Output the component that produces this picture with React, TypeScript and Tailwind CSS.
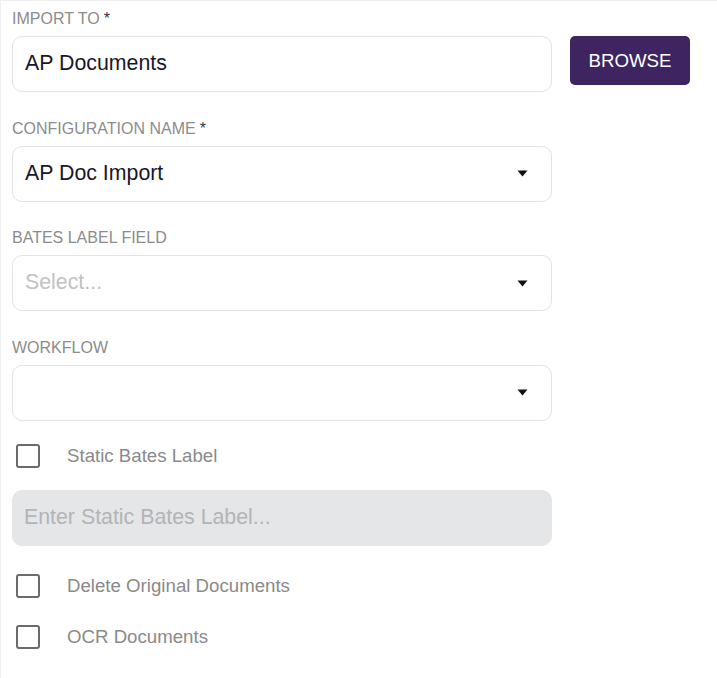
import React from 'react';

const font = { fontFamily: '"Liberation Sans", Arial, sans-serif' };

const Caret = () => (
  <svg width="11" height="7" viewBox="0 0 11 7" className="shrink-0">
    <path d="M0.5 0.5 H10.5 L5.5 6.5 Z" fill="#111" />
  </svg>
);

const FieldLabel = ({ text, required, first }: { text: string; required?: boolean; first?: boolean }) => (
  <div className={`h-5 leading-5 text-[16px] uppercase text-[#8c8c8c] mb-[7px] ${first ? '' : 'mt-[26.5px]'}`}>
    {text}
    {required && <span className="text-[#2f3542] ml-[4px]">*</span>}
  </div>
);

const SelectBox = ({ value, placeholder }: { value?: string; placeholder?: string }) => (
  <div className="w-[540px] h-[56px] rounded-[10px] border border-[#e3e3e3] bg-white flex items-center pl-[12px] pr-[23px]">
    <span className={`flex-1 text-[21.33px] ${value ? 'text-[#17172a]' : 'text-[#c2c2c2]'}`}>{value ?? placeholder}</span>
    <Caret />
  </div>
);

const CheckRow = ({ label, className }: { label: string; className: string }) => (
  <label className={`flex items-center h-8 ${className}`}>
    <span className="ml-[4px] w-[24px] h-[24px] rounded-[3px] border-[2.5px] border-[#6b6b6b] bg-white" />
    <span className="ml-[27px] text-[18.67px] text-[#8a8a8a]">{label}</span>
  </label>
);

export default function App() {
  return (
    <div className="w-[717px] h-[678px] bg-white border-t border-l border-[#efefef]" style={font}>
      <div className="pl-[11px] pt-[8px]">
        <FieldLabel text="Import to" required first />
        <div className="flex items-start">
          <div className="w-[540px] h-[56px] rounded-[10px] border border-[#e3e3e3] flex items-center pl-[12px]">
            <span className="text-[21.33px] text-[#17172a]">AP Documents</span>
          </div>
          <button className="ml-[18px] w-[120px] h-[49px] rounded-[5px] bg-[#3e2461] text-white text-[18.67px] uppercase">
            Browse
          </button>
        </div>

        <FieldLabel text="Configuration name" required />
        <SelectBox value="AP Doc Import" />

        <FieldLabel text="Bates label field" />
        <SelectBox placeholder="Select..." />

        <FieldLabel text="Workflow" />
        <SelectBox />

        <CheckRow label="Static Bates Label" className="mt-[19px]" />

        <div className="mt-[18px] w-[540px] h-[56px] rounded-[10px] bg-[#e5e6e8] flex items-center pl-[12px]">
          <span className="text-[21.33px] text-[#b3b4b6]">Enter Static Bates Label...</span>
        </div>

        <CheckRow label="Delete Original Documents" className="mt-[24px]" />
        <CheckRow label="OCR Documents" className="mt-[19px]" />
      </div>
    </div>
  );
}
